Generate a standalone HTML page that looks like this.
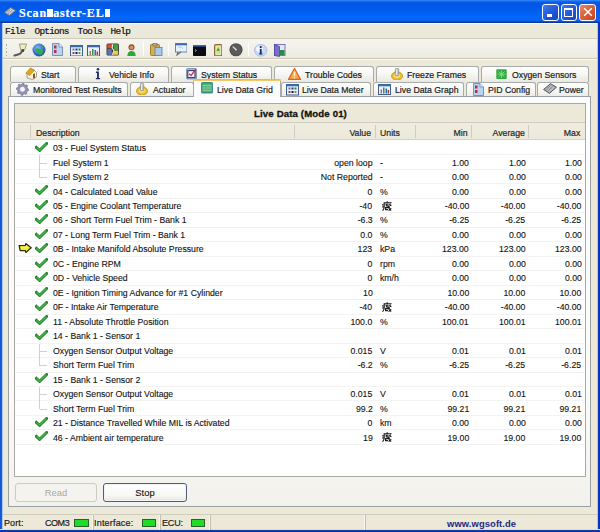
<!DOCTYPE html>
<html><head><meta charset="utf-8">
<style>
*{box-sizing:border-box}
html,body{margin:0;padding:0;width:600px;height:532px;overflow:hidden;background:#0831C8}
body{position:relative;font-family:"Liberation Sans",sans-serif;font-size:9px;color:#000}
.a{position:absolute}
#title{left:0;top:0;width:600px;height:23px;background:linear-gradient(#3C95FF 0px,#1A6CF2 1px,#0456E4 3px,#0058E8 7px,#0064F6 15px,#0468FB 20px,#0A5AD8 21px,#0038A8 22.5px)}
.mb{display:inline-block;width:5.5px;height:7.5px;background:#fff;margin:0 0.6px 0 0.2px;vertical-align:0px}
#ttext{left:19px;top:5.5px;color:#fff;font-family:"Liberation Serif",serif;font-weight:bold;font-size:12px;letter-spacing:0.8px;line-height:14px;-webkit-text-stroke:0.2px #fff}
.tbtn{top:4px;width:16.5px;height:16.5px;border:1px solid #fff;border-radius:3px;background:linear-gradient(135deg,#3C7CF0,#1F55D8 60%,#1848C0);box-shadow:0 0 0 0.5px #2A5CD8}
#client{left:2px;top:23px;width:595px;height:506px;background:#ECE9D8}
#bborder{left:0;top:529px;width:600px;height:3px;background:linear-gradient(#E0E8FF 0,#C8D8F8 0.7px,#1640B0 1px,#0A2C98)}
#lborder{left:0;top:23px;width:2.8px;height:506px;background:linear-gradient(90deg,#1A58D4 0,#1A58D4 1.8px,#A8C8F4 1.8px)}
#rborder{left:596.5px;top:23px;width:3.5px;height:509px;background:linear-gradient(90deg,#A8C8F8 0,#A8C8F8 0.8px,#0A34C0 0.8px)}
#menu{left:2.5px;top:23px;width:594px;height:16px;background:#EBE9DA;border-top:1px solid #FFFFFF}
.mn{font-family:"Liberation Mono",monospace;font-weight:normal;font-size:9.4px;letter-spacing:-0.75px;top:2px;color:#111;line-height:12px;-webkit-text-stroke:0.2px #111}
#tb{left:2.5px;top:38px;width:594px;height:21px;background:linear-gradient(#F5F4EE,#F0EFE7 70%,#EAE8DE);border-top:1px solid #CFCBBA;border-bottom:1px solid #C9C6B6;box-shadow:0 1px 0 #FAFAF6}
.grip{left:3px;width:1.5px;height:1.5px;background:#B4B09C}
.tsep{top:3px;width:1px;height:14px;background:#C8C4B2;border-right:1px solid #FFFFFF}
.tab{position:absolute;height:16px;border:1px solid #A7ABAC;border-bottom:none;border-radius:3px 3px 0 0;background:linear-gradient(#FFFFFF,#F6F6F2 50%,#E9E8E2)}
.tab.sel{height:18px;background:#FCFCFE;border-top:none;border-bottom:none;z-index:2;border-radius:2px 2px 0 0}
.tab.sel:before{content:"";position:absolute;left:-1px;right:-1px;top:0;height:2px;background:linear-gradient(#EDB040,#F8D070);border-radius:2px 2px 0 0}
.tt{position:absolute;font-size:9.7px;white-space:nowrap;color:#1a1a1a;line-height:11px;-webkit-text-stroke:0.2px #1a1a1a;transform:scaleX(0.9);transform-origin:0 0}
.tt.r1{top:68.7px}
.tt.r2{top:83.6px;z-index:3}
#panel{left:8px;top:96px;width:583px;height:411px;border:1px solid #9AA0A2;background:linear-gradient(#FCFCFE 0,#FAFAF8 300px,#F2F1EC)}
#grid{left:14px;top:103px;width:572px;height:374px;border:1px solid #A9A9A4;background:#FFF}
#gtitle{left:0;top:0;width:570px;height:19px;background:#ECE9D8;border-bottom:1px solid #CFCDBF;font-weight:bold;font-size:9.6px;line-height:20px;text-align:center;color:#111;-webkit-text-stroke:0.3px #111;padding-left:1px;letter-spacing:0.15px}
#ghead{left:0;top:19px;width:570px;height:17px;background:linear-gradient(#EFEDE0,#EBE9DA);border-bottom:1px solid #D5D2C4;font-size:9px;color:#222}
.hd{position:absolute;top:4.2px;font-size:9.7px;transform:scaleX(0.9);transform-origin:0 0;-webkit-text-stroke:0.2px #222}
.hd.r{transform-origin:100% 0}
.vd{position:absolute;top:2px;width:1px;height:13px;background:#CFCDC1}
.t{position:absolute;font-size:9.7px;white-space:nowrap;color:#111;transform:scaleX(0.9);transform-origin:0 0;-webkit-text-stroke:0.12px #111}
.t.r{transform-origin:100% 0}
.r{text-align:right}
#status{left:2.5px;top:514px;width:594px;height:15px;background:#ECE9D8;border-top:1px solid #D0CDBF}
.sbsep{position:absolute;top:0;width:2px;height:15px;background:#C2BFB0;border-left:1px solid #F8F8F2}
.st{position:absolute;top:1.5px;font-size:9.8px;color:#1a1a1a;white-space:nowrap;line-height:11px;transform:scaleX(0.92);transform-origin:0 0;-webkit-text-stroke:0.2px #1a1a1a}
.led{position:absolute;top:4px;width:14.5px;height:7.5px;background:#1EDC28;border:1px solid #2A602A}
.btn{position:absolute;border-radius:3px;text-align:center;font-size:9.4px;line-height:18px}
.sep{position:absolute;left:0;width:570px;height:1px;background:#F3F3F1}
.tl{position:absolute;width:1px;background:#D0D0D0}
.th{position:absolute;width:6.5px;height:1px;background:#D0D0D0}
#rows{left:0;top:0;width:570px;height:372px}

</style></head><body>
<div class="a" id="title">
 <svg class="a" style="left:4px;top:7px" width="12" height="9" viewBox="0 0 12 9"><path d="M0.5 5.5 L6.5 0.6 L11.5 3.4 L5.5 8.4 Z" fill="#C9CCD4" stroke="#6E7280" stroke-width="0.9"/><path d="M2.5 5.6 L6.6 2.2 M4 6.6 L8.2 3.2" stroke="#8A8E9A" stroke-width="0.8"/></svg>
 <div class="a" id="ttext">Scan<span class="mb"></span>aster-EL<span class="mb"></span></div>
 <div class="a tbtn" style="left:542px"><div class="a" style="left:3.5px;top:9.2px;width:5.5px;height:2.5px;background:#fff"></div></div>
 <div class="a tbtn" style="left:560.5px"><div class="a" style="left:2.8px;top:2.8px;width:9.2px;height:8.8px;border:1.2px solid #fff;border-top-width:2.4px"></div></div>
 <div class="a tbtn" style="left:579px;background:linear-gradient(135deg,#E7896A,#D65C36 55%,#C4441E)"><svg class="a" style="left:2.6px;top:2.3px" width="10" height="10" viewBox="0 0 10 10"><path d="M1.2 1.2L8.8 8.8M8.8 1.2L1.2 8.8" stroke="#fff" stroke-width="1.5"/></svg></div>
</div>
<div class="a" id="client"></div>
<div class="a" id="lborder"></div>
<div class="a" id="rborder"></div>
<div class="a" id="bborder"></div>
<div class="a" id="menu">
 <span class="a mn" style="left:2.5px">File</span>
 <span class="a mn" style="left:32px">Options</span>
 <span class="a mn" style="left:75px">Tools</span>
 <span class="a mn" style="left:108px">Help</span>
</div>
<div class="a" id="tb">
 <div class="a grip" style="top:5px"></div><div class="a grip" style="top:8.5px"></div><div class="a grip" style="top:12px"></div><div class="a grip" style="top:15.5px"></div>
 <div class="a tsep" style="left:140.5px"></div>
 <div class="a tsep" style="left:165px"></div>
 <div class="a tsep" style="left:245.5px"></div>
</div>
<!-- toolbar icons (page coords) -->
<svg class="a" style="left:13px;top:43px" width="15" height="14" viewBox="0 0 15 14"><path d="M9 8 Q8 11 5 11.5 L1.5 12.5" fill="none" stroke="#5A5A5A" stroke-width="2.2" stroke-linecap="round"/><path d="M6.5 1 L13.5 1 L12 6 L10.5 8.5 L8.5 8.5 L7.5 6 Z" fill="#F1EDB8" stroke="#8C8A6A" stroke-width="0.8"/><rect x="8.4" y="6.2" width="2.6" height="2.6" fill="#404040"/></svg>
<svg class="a" style="left:31.5px;top:43.2px" width="14" height="14" viewBox="0 0 14 14"><defs><radialGradient id="gl" cx="0.4" cy="0.35" r="0.7"><stop offset="0" stop-color="#8AB8F0"/><stop offset="0.6" stop-color="#3A72D0"/><stop offset="1" stop-color="#1E4A9A"/></radialGradient></defs><circle cx="7" cy="7" r="6.5" fill="url(#gl)"/><path d="M3.5 6 Q5.5 4.5 7.5 6 Q10.5 6 11.5 8 Q10.5 11 8 12.2 Q6.8 10.2 5.2 9.2 Q3.2 8 3.5 6Z" fill="#2EB044"/><path d="M8.5 2.2 Q10.5 2.6 11.6 4.4 L10 4.8 Z" fill="#34B04A"/></svg>
<svg class="a" style="left:52px;top:43.3px" width="11" height="13" viewBox="0 0 11 13"><path d="M0.5 0.5 H7 L10.5 4 V12.5 H0.5 Z" fill="#B8D4F0" stroke="#6A8AB8" stroke-width="0.9"/><path d="M7 0.5 V4 H10.5" fill="#E8F0FA" stroke="#6A8AB8" stroke-width="0.8"/><rect x="2" y="2.5" width="2.5" height="3" fill="#B03040"/><rect x="2" y="7" width="2.5" height="3" fill="#B03040"/></svg>
<svg class="a" style="left:69.5px;top:44.5px" width="13" height="11.5" viewBox="0 0 13 11.5"><rect x="0.5" y="0.5" width="12" height="10.5" fill="#EAF0F8" stroke="#3D5F8F" stroke-width="1"/><rect x="0.5" y="0.5" width="12" height="1.8" fill="#3D6BAE"/><g><rect x="2.5" y="3.5" width="2" height="2" fill="#5A7A9A"/><rect x="5.5" y="3.5" width="2" height="2" fill="#1F3F7F"/><rect x="8.5" y="3.5" width="2" height="2" fill="#2A7A4A"/><rect x="2.5" y="7" width="2" height="2" fill="#B04040"/><rect x="5.5" y="7" width="2" height="2" fill="#102040"/><rect x="8.5" y="7" width="2" height="2" fill="#7A8A6A"/></g></svg>
<svg class="a" style="left:87px;top:44.5px" width="13" height="11.5" viewBox="0 0 13 11.5"><rect x="0.5" y="0.5" width="12" height="10.5" fill="#EAF0F8" stroke="#3D5F8F" stroke-width="1"/><rect x="0.5" y="0.5" width="12" height="1.8" fill="#3D6BAE"/><rect x="2.5" y="6" width="1.5" height="4" fill="#C07040"/><rect x="5" y="4" width="1.5" height="6" fill="#2A9A4A"/><rect x="7.5" y="5" width="1.5" height="5" fill="#3A6AB0"/><rect x="9.6" y="6.5" width="1.5" height="3.5" fill="#A04030"/></svg>
<svg class="a" style="left:105.5px;top:43.3px" width="13.5" height="13" viewBox="0 0 13.5 13"><rect x="0.5" y="0.5" width="12.5" height="12" rx="1.5" fill="#3a3a3a"/><path d="M1.3 1.3 H6.5 L6 5 L1.3 5.5Z" fill="#D8502E"/><path d="M7.2 1.3 H12.2 V7 L8.2 7.2 Z" fill="#3EA63A"/><path d="M1.3 6.2 L5.5 5.8 L6.2 11.7 H1.3Z" fill="#5A72C0"/><path d="M8.4 7.8 L12.2 7.6 V11.7 H6.9 Z" fill="#E6D24A"/><path d="M6.6 1.3 L6.2 5.4 L8 7.5 L6.4 11.7" fill="none" stroke="#F4F0E0" stroke-width="1.1"/></svg>
<svg class="a" style="left:126.5px;top:44px" width="9" height="12" viewBox="0 0 9 12"><circle cx="4.5" cy="3.3" r="3" fill="#8A4A20"/><circle cx="4.5" cy="3.6" r="2" fill="#D89060"/><path d="M0.3 12 Q0.5 7 4.5 7 Q8.5 7 8.7 12 Z" fill="#2DA63A"/></svg>
<svg class="a" style="left:150px;top:43.3px" width="12.5" height="13" viewBox="0 0 12.5 13"><rect x="0.5" y="1.5" width="9" height="11" rx="1" fill="#D8B048" stroke="#8A6A20" stroke-width="0.8"/><rect x="3" y="0.5" width="4" height="2.5" fill="#B0B0B0" stroke="#606060" stroke-width="0.6"/><rect x="5" y="4.5" width="7" height="8" fill="#A8C8EC" stroke="#5A80B0" stroke-width="0.8"/></svg>
<svg class="a" style="left:174.5px;top:43.3px" width="12.5" height="12.5" viewBox="0 0 12.5 12.5"><rect x="0.5" y="0.5" width="11.5" height="8.5" fill="#E8F2FC" stroke="#5A7AA8" stroke-width="0.9"/><rect x="0.5" y="0.5" width="11.5" height="1.8" fill="#3D6BAE"/><path d="M3 9 L2 12 L6 9" fill="none" stroke="#6A6A6A" stroke-width="1.1"/><path d="M3 4 Q6 3 8 5.5" stroke="#A0B8D8" fill="none" stroke-width="0.8"/></svg>
<svg class="a" style="left:192.5px;top:44.5px" width="13" height="11" viewBox="0 0 13 11"><rect x="0" y="0" width="13" height="11" rx="0.8" fill="#0C0C14"/><rect x="0" y="0" width="13" height="1.6" fill="#3A66C0"/><path d="M2 4.5 L3.5 5.5 L2 6.5" stroke="#d0d0d0" stroke-width="0.7" fill="none"/></svg>
<svg class="a" style="left:213.5px;top:43.5px" width="8.5" height="12.5" viewBox="0 0 8.5 12.5"><rect x="0.6" y="0.6" width="7.3" height="11.3" rx="1.2" fill="#E8E4B0" stroke="#8A6A30" stroke-width="1.2"/><path d="M4.2 3 L6 7 H2.4Z" fill="#58A048"/><rect x="2.5" y="7.5" width="3.5" height="2" fill="#C8D8A0"/></svg>
<svg class="a" style="left:229.3px;top:43px" width="14" height="13.5" viewBox="0 0 14 13.5"><circle cx="7" cy="6.75" r="6.6" fill="#4E4E4E"/><circle cx="7" cy="6.75" r="5.4" fill="#5C5C5C"/><path d="M3.8 3.6 L7.6 7.2" stroke="#E8E8E8" stroke-width="1.3"/></svg>
<svg class="a" style="left:254px;top:44.3px" width="13.5" height="12.5" viewBox="0 0 13.5 12.5"><ellipse cx="6.75" cy="6.25" rx="6.3" ry="5.9" fill="#C8D8F0" stroke="#9AB0D0" stroke-width="0.6"/><ellipse cx="5.5" cy="5" rx="3.5" ry="3" fill="#F0F6FF"/><circle cx="6.75" cy="3.2" r="1.1" fill="#1A2A7A"/><rect x="5.8" y="5" width="1.9" height="5" fill="#1A2A7A"/><rect x="5" y="9.5" width="3.5" height="1" fill="#1A2A7A"/></svg>
<svg class="a" style="left:274px;top:43.5px" width="11.5" height="13" viewBox="0 0 11.5 13"><rect x="0.5" y="0.5" width="10.5" height="11" fill="#E0E8F0" stroke="#5A5AA8" stroke-width="0.8"/><rect x="6" y="6" width="4.5" height="5" fill="#2A8A4A"/><path d="M0.5 0.5 L5.5 2.5 V12.5 L0.5 11.5Z" fill="#7A70C8" stroke="#4A40A0" stroke-width="0.8"/></svg>

<!-- tabs row 1 -->
<div class="tab" style="left:10px;top:66px;width:66px"></div>
<div class="tab" style="left:77.5px;top:66px;width:91.5px"></div>
<div class="tab" style="left:170.5px;top:66px;width:101.5px"></div>
<div class="tab" style="left:273.5px;top:66px;width:100.5px"></div>
<div class="tab" style="left:376px;top:66px;width:102.5px"></div>
<div class="tab" style="left:481px;top:66px;width:108px"></div>
<span class="tt r1" style="left:40.5px">Start</span>
<span class="tt r1" style="left:108.5px">Vehicle Info</span>
<span class="tt r1" style="left:201px">System Status</span>
<span class="tt r1" style="left:305px">Trouble Codes</span>
<span class="tt r1" style="left:406.5px">Freeze Frames</span>
<span class="tt r1" style="left:511.5px">Oxygen Sensors</span>
<!-- tab icons row 1 -->
<svg class="a" style="left:24.5px;top:67px" width="13" height="13" viewBox="0 0 13 13"><path d="M2 6.5 L2 11 L7.5 12.5 L11.5 10 L11.5 5.5 L8 2 Z" fill="#FBF4DC" stroke="#8A8070" stroke-width="0.7"/><path d="M0.8 6.2 L5.5 0.8 L9.2 3.5 L4.5 8.5 Z" fill="#E4A418" stroke="#B07A10" stroke-width="0.6"/><path d="M8 7 L10 6.2 L10 11 L8 11.8Z" fill="#8A5A20"/></svg>
<svg class="a" style="left:94.8px;top:68px" width="6" height="11.5" viewBox="0 0 6 11.5"><circle cx="3" cy="1.3" r="1.3" fill="#22306E"/><path d="M0.9 3.6 H3.9 V9.9 H5.1 V11.2 H0.9 V9.9 H2 V4.9 H0.9Z" fill="#22306E"/></svg>
<svg class="a" style="left:185.5px;top:68px" width="11" height="11.5" viewBox="0 0 11 11.5"><rect x="0.5" y="0.5" width="10" height="10.5" rx="1" fill="#A8B8D8" stroke="#6A7AA0" stroke-width="0.7"/><rect x="1.8" y="2.6" width="7.2" height="7" fill="#F4F4FA" stroke="#2E3C80" stroke-width="1.1"/><path d="M3.2 5.8 L5 7.6 L9.8 1.2" fill="none" stroke="#D02A3A" stroke-width="1.3"/></svg>
<svg class="a" style="left:287.5px;top:67.8px" width="13" height="12" viewBox="0 0 13 12"><defs><linearGradient id="wg" x1="0" y1="0" x2="0" y2="1"><stop offset="0" stop-color="#F8D070"/><stop offset="1" stop-color="#F0A040"/></linearGradient></defs><path d="M6.5 0.5 L12.5 11.5 H0.5 Z" fill="url(#wg)" stroke="#E0602A" stroke-width="1.3" stroke-linejoin="round"/><rect x="5.8" y="3.8" width="1.4" height="4.2" fill="#FFF6D8"/><rect x="5.8" y="9" width="1.4" height="1.3" fill="#FFF6D8"/></svg>
<svg class="a" style="left:391px;top:67.5px" width="12" height="12.5" viewBox="0 0 12 12.5"><ellipse cx="6" cy="8" rx="5.5" ry="4.2" fill="#EEBE2A" stroke="#C8920E" stroke-width="0.8"/><ellipse cx="6" cy="7.6" rx="3.2" ry="2.3" fill="#F8E07A"/><rect x="4.3" y="0.4" width="3.4" height="7.4" rx="1" fill="#C4C4C4" stroke="#7A7A7A" stroke-width="0.6"/><rect x="5" y="1" width="1" height="6" fill="#EEE"/></svg>
<svg class="a" style="left:495.5px;top:68.5px" width="11" height="10.5" viewBox="0 0 11 10.5"><rect x="0.3" y="0.3" width="10.4" height="9.9" rx="1.2" fill="#30A840"/><path d="M2.5 2.5 L8.5 8 M8.5 2.5 L2.5 8 M5.5 1.5 V9 M1.5 5.2 H9.5" stroke="#8AE08A" stroke-width="0.9"/></svg>

<!-- tabs row 2 -->
<div class="tab" style="left:10px;top:81.5px;width:117.5px"></div>
<div class="tab" style="left:130px;top:81.5px;width:63.5px"></div>
<div class="tab" style="left:280.5px;top:81.5px;width:90px"></div>
<div class="tab" style="left:372.5px;top:81.5px;width:91.5px"></div>
<div class="tab" style="left:466px;top:81.5px;width:69.5px"></div>
<div class="tab" style="left:537px;top:81.5px;width:52px"></div>
<div class="a" id="panel"></div>
<div class="tab sel" style="left:192.5px;top:79px;width:88px"></div>
<span class="tt r2" style="left:33px">Monitored Test Results</span>
<span class="tt r2" style="left:153px">Actuator</span>
<span class="tt r2" style="left:217px;z-index:3">Live Data Grid</span>
<span class="tt r2" style="left:302px">Live Data Meter</span>
<span class="tt r2" style="left:394.5px">Live Data Graph</span>
<span class="tt r2" style="left:487.8px">PID Config</span>
<span class="tt r2" style="left:559px">Power</span>
<!-- tab icons row 2 -->
<svg class="a" style="left:16px;top:83px" width="13" height="12.5" viewBox="0 0 13 12.5"><path d="M6.50 0.05 L7.71 0.17 L8.38 1.72 L9.22 2.18 L10.88 1.87 L11.66 2.81 L11.03 4.37 L11.31 5.29 L12.70 6.25 L12.58 7.46 L11.03 8.13 L10.57 8.97 L10.88 10.63 L9.94 11.41 L8.38 10.78 L7.46 11.06 L6.50 12.45 L5.29 12.33 L4.62 10.78 L3.78 10.32 L2.12 10.63 L1.34 9.69 L1.97 8.13 L1.69 7.21 L0.30 6.25 L0.42 5.04 L1.97 4.37 L2.43 3.53 L2.12 1.87 L3.06 1.09 L4.62 1.72 L5.54 1.44Z" fill="#9090B4" stroke="#6E6E96" stroke-width="0.6"/><circle cx="6.5" cy="6.25" r="2.9" fill="#F6F6FA" stroke="#707094" stroke-width="0.6"/></svg>
<svg class="a" style="left:136px;top:82.5px" width="12" height="12.5" viewBox="0 0 12 12.5"><ellipse cx="6" cy="8" rx="5.5" ry="4.2" fill="#EEBE2A" stroke="#C8920E" stroke-width="0.8"/><ellipse cx="6" cy="7.6" rx="3.2" ry="2.3" fill="#F8E07A"/><rect x="4.3" y="0.4" width="3.4" height="7.4" rx="1" fill="#C4C4C4" stroke="#7A7A7A" stroke-width="0.6"/><rect x="5" y="1" width="1" height="6" fill="#EEE"/></svg>
<svg class="a" style="left:201px;top:82px;z-index:3" width="12" height="11.5" viewBox="0 0 12 11.5"><rect x="0.6" y="0.6" width="10.8" height="10.3" rx="1" fill="#48B070" stroke="#3A8A8A" stroke-width="1.1"/><path d="M1.5 3.7 H10.5 M1.5 6 H10.5 M1.5 8.3 H10.5" stroke="#A8E0B8" stroke-width="0.8"/></svg>
<svg class="a" style="left:286px;top:84px" width="13" height="11.5" viewBox="0 0 13 11.5"><rect x="0.5" y="0.5" width="12" height="10.5" fill="#EAF0F8" stroke="#3D5F8F" stroke-width="1"/><rect x="0.5" y="0.5" width="12" height="1.8" fill="#3D6BAE"/><g><rect x="2.5" y="3.5" width="2" height="2" fill="#5A7A9A"/><rect x="5.5" y="3.5" width="2" height="2" fill="#1F3F7F"/><rect x="8.5" y="3.5" width="2" height="2" fill="#2A7A4A"/><rect x="2.5" y="7" width="2" height="2" fill="#B04040"/><rect x="5.5" y="7" width="2" height="2" fill="#102040"/><rect x="8.5" y="7" width="2" height="2" fill="#7A8A6A"/></g></svg>
<svg class="a" style="left:378px;top:84px" width="13" height="11" viewBox="0 0 13 11"><rect x="0.5" y="0.5" width="12" height="10" fill="#EAF0F8" stroke="#3D5F8F" stroke-width="1"/><rect x="0.5" y="0.5" width="12" height="1.8" fill="#3D6BAE"/><rect x="2.5" y="5.5" width="1.5" height="4" fill="#C07040"/><rect x="5" y="3.5" width="1.5" height="6" fill="#2A9A4A"/><rect x="7.5" y="4.5" width="1.5" height="5" fill="#3A6AB0"/><rect x="9.6" y="6" width="1.5" height="3.5" fill="#A04030"/></svg>
<svg class="a" style="left:473px;top:82.5px" width="11" height="13" viewBox="0 0 11 13"><path d="M0.5 0.5 H7 L10.5 4 V12.5 H0.5 Z" fill="#B8D4F0" stroke="#6A8AB8" stroke-width="0.9"/><path d="M7 0.5 V4 H10.5" fill="#E8F0FA" stroke="#6A8AB8" stroke-width="0.8"/><rect x="2" y="2.5" width="2.5" height="3" fill="#B03040"/><rect x="2" y="7" width="2.5" height="3" fill="#B03040"/></svg>
<svg class="a" style="left:542.5px;top:83px" width="14" height="11" viewBox="0 0 14 11"><path d="M0.6 6.5 L7.5 0.7 L13.4 4.2 L6.5 10.3 Z" fill="#B8BAC0" stroke="#4A4C54" stroke-width="1"/><path d="M3 6.6 L7.6 2.6 M5 7.8 L9.6 3.8" stroke="#7A7C84" stroke-width="0.8"/></svg>

<div class="a" id="grid">
 <div class="a" id="gtitle">Live Data (Mode 01)</div>
 <div class="a" id="ghead">
  <div class="vd" style="left:15px"></div>
  <span class="hd" style="left:21px">Description</span>
  <div class="vd" style="left:279px"></div>
  <span class="hd r" style="right:214px">Value</span>
  <div class="vd" style="left:360px"></div>
  <span class="hd" style="left:365px">Units</span>
  <div class="vd" style="left:400px"></div>
  <span class="hd r" style="right:117.5px">Min</span>
  <div class="vd" style="left:456px"></div>
  <span class="hd r" style="right:60.5px">Average</span>
  <div class="vd" style="left:513px"></div>
  <span class="hd r" style="right:5px">Max</span>
 </div>

<div class="a" id="rows">
<div class="sep" style="top:50.47px"></div>
<svg class="a" style="left:20.200000000000003px;top:37.80px" width="13" height="10" viewBox="0 0 13 10"><path d="M1.3 5.4 L4.6 8.4 L11.6 1.5" fill="none" stroke="#24802C" stroke-width="2.9" stroke-linejoin="miter" stroke-linecap="square"/><path d="M1.6 5.4 L4.6 8.1 L11.3 1.6" fill="none" stroke="#3EB048" stroke-width="1.5" /></svg>
<span class="t" style="left:37.5px;top:38.10px">03 - Fuel System Status</span>
<div class="sep" style="top:64.94px"></div>
<div class="tl" style="left:24px;top:51.47px;height:22.44px"></div>
<div class="th" style="left:25px;top:58.57px"></div>
<span class="t" style="left:37.5px;top:52.57px">Fuel System 1</span>
<span class="t r" style="right:212.5px;top:52.57px">open loop</span>
<span class="t" style="left:365px;top:52.57px">-</span>
<span class="t r" style="right:116.0px;top:52.57px">1.00</span>
<span class="t r" style="right:59.5px;top:52.57px">1.00</span>
<span class="t r" style="right:3.5px;top:52.57px">1.00</span>
<div class="sep" style="top:79.41px"></div>
<div class="th" style="left:25px;top:73.04px"></div>
<span class="t" style="left:37.5px;top:67.04px">Fuel System 2</span>
<span class="t r" style="right:212.5px;top:67.04px">Not Reported</span>
<span class="t" style="left:365px;top:67.04px">-</span>
<span class="t r" style="right:116.0px;top:67.04px">0.00</span>
<span class="t r" style="right:59.5px;top:67.04px">0.00</span>
<span class="t r" style="right:3.5px;top:67.04px">0.00</span>
<div class="sep" style="top:93.88px"></div>
<svg class="a" style="left:20.200000000000003px;top:81.21px" width="13" height="10" viewBox="0 0 13 10"><path d="M1.3 5.4 L4.6 8.4 L11.6 1.5" fill="none" stroke="#24802C" stroke-width="2.9" stroke-linejoin="miter" stroke-linecap="square"/><path d="M1.6 5.4 L4.6 8.1 L11.3 1.6" fill="none" stroke="#3EB048" stroke-width="1.5" /></svg>
<span class="t" style="left:37.5px;top:81.51px">04 - Calculated Load Value</span>
<span class="t r" style="right:212.5px;top:81.51px">0</span>
<span class="t" style="left:365px;top:81.51px">%</span>
<span class="t r" style="right:116.0px;top:81.51px">0.00</span>
<span class="t r" style="right:59.5px;top:81.51px">0.00</span>
<span class="t r" style="right:3.5px;top:81.51px">0.00</span>
<div class="sep" style="top:108.35px"></div>
<svg class="a" style="left:20.200000000000003px;top:95.68px" width="13" height="10" viewBox="0 0 13 10"><path d="M1.3 5.4 L4.6 8.4 L11.6 1.5" fill="none" stroke="#24802C" stroke-width="2.9" stroke-linejoin="miter" stroke-linecap="square"/><path d="M1.6 5.4 L4.6 8.1 L11.3 1.6" fill="none" stroke="#3EB048" stroke-width="1.5" /></svg>
<span class="t" style="left:37.5px;top:95.98px">05 - Engine Coolant Temperature</span>
<span class="t r" style="right:212.5px;top:95.98px">-40</span>
<svg class="a" style="left:366.5px;top:96.58px" width="10" height="10" viewBox="0 0 10 10"><g fill="none" stroke="#1a1a1a" stroke-width="1.15"><path d="M5.2 0.2V1.5M1.6 1.7H9.6M2.2 1.7V5.8Q2.1 8.3 0.5 9.7M0.3 3.4L1.4 4.2M0.3 6.3L1.5 5.6"/><path d="M3.6 2.8L5 4M5.4 2.7L6.4 3.6M8.6 2.6L7.4 3.8M7.2 3.8L9.4 4.6M3.8 4.9H6.2V6.6H3.6V8.6H6M7.3 5.2V7M6.8 7.3L9.2 9.5M9.2 7.2L6.6 9.6"/></g></svg>
<span class="t r" style="right:116.0px;top:95.98px">-40.00</span>
<span class="t r" style="right:59.5px;top:95.98px">-40.00</span>
<span class="t r" style="right:3.5px;top:95.98px">-40.00</span>
<div class="sep" style="top:122.82px"></div>
<svg class="a" style="left:20.200000000000003px;top:110.15px" width="13" height="10" viewBox="0 0 13 10"><path d="M1.3 5.4 L4.6 8.4 L11.6 1.5" fill="none" stroke="#24802C" stroke-width="2.9" stroke-linejoin="miter" stroke-linecap="square"/><path d="M1.6 5.4 L4.6 8.1 L11.3 1.6" fill="none" stroke="#3EB048" stroke-width="1.5" /></svg>
<span class="t" style="left:37.5px;top:110.45px">06 - Short Term Fuel Trim - Bank 1</span>
<span class="t r" style="right:212.5px;top:110.45px">-6.3</span>
<span class="t" style="left:365px;top:110.45px">%</span>
<span class="t r" style="right:116.0px;top:110.45px">-6.25</span>
<span class="t r" style="right:59.5px;top:110.45px">-6.25</span>
<span class="t r" style="right:3.5px;top:110.45px">-6.25</span>
<div class="sep" style="top:137.29px"></div>
<svg class="a" style="left:20.200000000000003px;top:124.62px" width="13" height="10" viewBox="0 0 13 10"><path d="M1.3 5.4 L4.6 8.4 L11.6 1.5" fill="none" stroke="#24802C" stroke-width="2.9" stroke-linejoin="miter" stroke-linecap="square"/><path d="M1.6 5.4 L4.6 8.1 L11.3 1.6" fill="none" stroke="#3EB048" stroke-width="1.5" /></svg>
<span class="t" style="left:37.5px;top:124.92px">07 - Long Term Fuel Trim - Bank 1</span>
<span class="t r" style="right:212.5px;top:124.92px">0.0</span>
<span class="t" style="left:365px;top:124.92px">%</span>
<span class="t r" style="right:116.0px;top:124.92px">0.00</span>
<span class="t r" style="right:59.5px;top:124.92px">0.00</span>
<span class="t r" style="right:3.5px;top:124.92px">0.00</span>
<div class="sep" style="top:151.76px"></div>
<svg class="a" style="left:20.200000000000003px;top:139.09px" width="13" height="10" viewBox="0 0 13 10"><path d="M1.3 5.4 L4.6 8.4 L11.6 1.5" fill="none" stroke="#24802C" stroke-width="2.9" stroke-linejoin="miter" stroke-linecap="square"/><path d="M1.6 5.4 L4.6 8.1 L11.3 1.6" fill="none" stroke="#3EB048" stroke-width="1.5" /></svg>
<svg class="a" style="left:3.3999999999999986px;top:139.19px" width="14" height="11" viewBox="0 0 14 11"><path d="M1.1 2.7 L7.2 2.7 L7.8 0.6 L13.2 4.8 L7.8 9.4 L7.2 7.5 L2.2 7.5 Z" fill="#F2F020" stroke="#2a2a18" stroke-width="1.25" stroke-linejoin="round"/><path d="M3 4 L9 4" stroke="#FAFA90" stroke-width="1"/></svg>
<span class="t" style="left:37.5px;top:139.39px">0B - Intake Manifold Absolute Pressure</span>
<span class="t r" style="right:212.5px;top:139.39px">123</span>
<span class="t" style="left:365px;top:139.39px">kPa</span>
<span class="t r" style="right:116.0px;top:139.39px">123.00</span>
<span class="t r" style="right:59.5px;top:139.39px">123.00</span>
<span class="t r" style="right:3.5px;top:139.39px">123.00</span>
<div class="sep" style="top:166.23px"></div>
<svg class="a" style="left:20.200000000000003px;top:153.56px" width="13" height="10" viewBox="0 0 13 10"><path d="M1.3 5.4 L4.6 8.4 L11.6 1.5" fill="none" stroke="#24802C" stroke-width="2.9" stroke-linejoin="miter" stroke-linecap="square"/><path d="M1.6 5.4 L4.6 8.1 L11.3 1.6" fill="none" stroke="#3EB048" stroke-width="1.5" /></svg>
<span class="t" style="left:37.5px;top:153.86px">0C - Engine RPM</span>
<span class="t r" style="right:212.5px;top:153.86px">0</span>
<span class="t" style="left:365px;top:153.86px">rpm</span>
<span class="t r" style="right:116.0px;top:153.86px">0.00</span>
<span class="t r" style="right:59.5px;top:153.86px">0.00</span>
<span class="t r" style="right:3.5px;top:153.86px">0.00</span>
<div class="sep" style="top:180.70px"></div>
<svg class="a" style="left:20.200000000000003px;top:168.03px" width="13" height="10" viewBox="0 0 13 10"><path d="M1.3 5.4 L4.6 8.4 L11.6 1.5" fill="none" stroke="#24802C" stroke-width="2.9" stroke-linejoin="miter" stroke-linecap="square"/><path d="M1.6 5.4 L4.6 8.1 L11.3 1.6" fill="none" stroke="#3EB048" stroke-width="1.5" /></svg>
<span class="t" style="left:37.5px;top:168.33px">0D - Vehicle Speed</span>
<span class="t r" style="right:212.5px;top:168.33px">0</span>
<span class="t" style="left:365px;top:168.33px">km/h</span>
<span class="t r" style="right:116.0px;top:168.33px">0.00</span>
<span class="t r" style="right:59.5px;top:168.33px">0.00</span>
<span class="t r" style="right:3.5px;top:168.33px">0.00</span>
<div class="sep" style="top:195.17px"></div>
<svg class="a" style="left:20.200000000000003px;top:182.50px" width="13" height="10" viewBox="0 0 13 10"><path d="M1.3 5.4 L4.6 8.4 L11.6 1.5" fill="none" stroke="#24802C" stroke-width="2.9" stroke-linejoin="miter" stroke-linecap="square"/><path d="M1.6 5.4 L4.6 8.1 L11.3 1.6" fill="none" stroke="#3EB048" stroke-width="1.5" /></svg>
<span class="t" style="left:37.5px;top:182.80px">0E - Ignition Timing Advance for #1 Cylinder</span>
<span class="t r" style="right:212.5px;top:182.80px">10</span>
<span class="t r" style="right:116.0px;top:182.80px">10.00</span>
<span class="t r" style="right:59.5px;top:182.80px">10.00</span>
<span class="t r" style="right:3.5px;top:182.80px">10.00</span>
<div class="sep" style="top:209.64px"></div>
<svg class="a" style="left:20.200000000000003px;top:196.97px" width="13" height="10" viewBox="0 0 13 10"><path d="M1.3 5.4 L4.6 8.4 L11.6 1.5" fill="none" stroke="#24802C" stroke-width="2.9" stroke-linejoin="miter" stroke-linecap="square"/><path d="M1.6 5.4 L4.6 8.1 L11.3 1.6" fill="none" stroke="#3EB048" stroke-width="1.5" /></svg>
<span class="t" style="left:37.5px;top:197.27px">0F - Intake Air Temperature</span>
<span class="t r" style="right:212.5px;top:197.27px">-40</span>
<svg class="a" style="left:366.5px;top:197.87px" width="10" height="10" viewBox="0 0 10 10"><g fill="none" stroke="#1a1a1a" stroke-width="1.15"><path d="M5.2 0.2V1.5M1.6 1.7H9.6M2.2 1.7V5.8Q2.1 8.3 0.5 9.7M0.3 3.4L1.4 4.2M0.3 6.3L1.5 5.6"/><path d="M3.6 2.8L5 4M5.4 2.7L6.4 3.6M8.6 2.6L7.4 3.8M7.2 3.8L9.4 4.6M3.8 4.9H6.2V6.6H3.6V8.6H6M7.3 5.2V7M6.8 7.3L9.2 9.5M9.2 7.2L6.6 9.6"/></g></svg>
<span class="t r" style="right:116.0px;top:197.27px">-40.00</span>
<span class="t r" style="right:59.5px;top:197.27px">-40.00</span>
<span class="t r" style="right:3.5px;top:197.27px">-40.00</span>
<div class="sep" style="top:224.11px"></div>
<svg class="a" style="left:20.200000000000003px;top:211.44px" width="13" height="10" viewBox="0 0 13 10"><path d="M1.3 5.4 L4.6 8.4 L11.6 1.5" fill="none" stroke="#24802C" stroke-width="2.9" stroke-linejoin="miter" stroke-linecap="square"/><path d="M1.6 5.4 L4.6 8.1 L11.3 1.6" fill="none" stroke="#3EB048" stroke-width="1.5" /></svg>
<span class="t" style="left:37.5px;top:211.74px">11 - Absolute Throttle Position</span>
<span class="t r" style="right:212.5px;top:211.74px">100.0</span>
<span class="t" style="left:365px;top:211.74px">%</span>
<span class="t r" style="right:116.0px;top:211.74px">100.01</span>
<span class="t r" style="right:59.5px;top:211.74px">100.01</span>
<span class="t r" style="right:3.5px;top:211.74px">100.01</span>
<div class="sep" style="top:238.58px"></div>
<svg class="a" style="left:20.200000000000003px;top:225.91px" width="13" height="10" viewBox="0 0 13 10"><path d="M1.3 5.4 L4.6 8.4 L11.6 1.5" fill="none" stroke="#24802C" stroke-width="2.9" stroke-linejoin="miter" stroke-linecap="square"/><path d="M1.6 5.4 L4.6 8.1 L11.3 1.6" fill="none" stroke="#3EB048" stroke-width="1.5" /></svg>
<span class="t" style="left:37.5px;top:226.21px">14 - Bank 1 - Sensor 1</span>
<div class="sep" style="top:253.05px"></div>
<div class="tl" style="left:24px;top:239.58px;height:22.44px"></div>
<div class="th" style="left:25px;top:246.68px"></div>
<span class="t" style="left:37.5px;top:240.68px">Oxygen Sensor Output Voltage</span>
<span class="t r" style="right:212.5px;top:240.68px">0.015</span>
<span class="t" style="left:365px;top:240.68px">V</span>
<span class="t r" style="right:116.0px;top:240.68px">0.01</span>
<span class="t r" style="right:59.5px;top:240.68px">0.01</span>
<span class="t r" style="right:3.5px;top:240.68px">0.01</span>
<div class="sep" style="top:267.52px"></div>
<div class="th" style="left:25px;top:261.15px"></div>
<span class="t" style="left:37.5px;top:255.15px">Short Term Fuel Trim</span>
<span class="t r" style="right:212.5px;top:255.15px">-6.2</span>
<span class="t" style="left:365px;top:255.15px">%</span>
<span class="t r" style="right:116.0px;top:255.15px">-6.25</span>
<span class="t r" style="right:59.5px;top:255.15px">-6.25</span>
<span class="t r" style="right:3.5px;top:255.15px">-6.25</span>
<div class="sep" style="top:281.99px"></div>
<svg class="a" style="left:20.200000000000003px;top:269.32px" width="13" height="10" viewBox="0 0 13 10"><path d="M1.3 5.4 L4.6 8.4 L11.6 1.5" fill="none" stroke="#24802C" stroke-width="2.9" stroke-linejoin="miter" stroke-linecap="square"/><path d="M1.6 5.4 L4.6 8.1 L11.3 1.6" fill="none" stroke="#3EB048" stroke-width="1.5" /></svg>
<span class="t" style="left:37.5px;top:269.62px">15 - Bank 1 - Sensor 2</span>
<div class="sep" style="top:296.46px"></div>
<div class="tl" style="left:24px;top:282.99px;height:22.44px"></div>
<div class="th" style="left:25px;top:290.09px"></div>
<span class="t" style="left:37.5px;top:284.09px">Oxygen Sensor Output Voltage</span>
<span class="t r" style="right:212.5px;top:284.09px">0.015</span>
<span class="t" style="left:365px;top:284.09px">V</span>
<span class="t r" style="right:116.0px;top:284.09px">0.01</span>
<span class="t r" style="right:59.5px;top:284.09px">0.01</span>
<span class="t r" style="right:3.5px;top:284.09px">0.01</span>
<div class="sep" style="top:310.93px"></div>
<div class="th" style="left:25px;top:304.56px"></div>
<span class="t" style="left:37.5px;top:298.56px">Short Term Fuel Trim</span>
<span class="t r" style="right:212.5px;top:298.56px">99.2</span>
<span class="t" style="left:365px;top:298.56px">%</span>
<span class="t r" style="right:116.0px;top:298.56px">99.21</span>
<span class="t r" style="right:59.5px;top:298.56px">99.21</span>
<span class="t r" style="right:3.5px;top:298.56px">99.21</span>
<div class="sep" style="top:325.40px"></div>
<svg class="a" style="left:20.200000000000003px;top:312.73px" width="13" height="10" viewBox="0 0 13 10"><path d="M1.3 5.4 L4.6 8.4 L11.6 1.5" fill="none" stroke="#24802C" stroke-width="2.9" stroke-linejoin="miter" stroke-linecap="square"/><path d="M1.6 5.4 L4.6 8.1 L11.3 1.6" fill="none" stroke="#3EB048" stroke-width="1.5" /></svg>
<span class="t" style="left:37.5px;top:313.03px">21 - Distance Travelled While MIL is Activated</span>
<span class="t r" style="right:212.5px;top:313.03px">0</span>
<span class="t" style="left:365px;top:313.03px">km</span>
<span class="t r" style="right:116.0px;top:313.03px">0.00</span>
<span class="t r" style="right:59.5px;top:313.03px">0.00</span>
<span class="t r" style="right:3.5px;top:313.03px">0.00</span>
<div class="sep" style="top:339.87px"></div>
<svg class="a" style="left:20.200000000000003px;top:327.20px" width="13" height="10" viewBox="0 0 13 10"><path d="M1.3 5.4 L4.6 8.4 L11.6 1.5" fill="none" stroke="#24802C" stroke-width="2.9" stroke-linejoin="miter" stroke-linecap="square"/><path d="M1.6 5.4 L4.6 8.1 L11.3 1.6" fill="none" stroke="#3EB048" stroke-width="1.5" /></svg>
<span class="t" style="left:37.5px;top:327.50px">46 - Ambient air temperature</span>
<span class="t r" style="right:212.5px;top:327.50px">19</span>
<svg class="a" style="left:366.5px;top:328.10px" width="10" height="10" viewBox="0 0 10 10"><g fill="none" stroke="#1a1a1a" stroke-width="1.15"><path d="M5.2 0.2V1.5M1.6 1.7H9.6M2.2 1.7V5.8Q2.1 8.3 0.5 9.7M0.3 3.4L1.4 4.2M0.3 6.3L1.5 5.6"/><path d="M3.6 2.8L5 4M5.4 2.7L6.4 3.6M8.6 2.6L7.4 3.8M7.2 3.8L9.4 4.6M3.8 4.9H6.2V6.6H3.6V8.6H6M7.3 5.2V7M6.8 7.3L9.2 9.5M9.2 7.2L6.6 9.6"/></g></svg>
<span class="t r" style="right:116.0px;top:327.50px">19.00</span>
<span class="t r" style="right:59.5px;top:327.50px">19.00</span>
<span class="t r" style="right:3.5px;top:327.50px">19.00</span>
</div>
</div>
<div class="a btn" style="left:15px;top:483px;width:82px;height:18.5px;border:1px solid #CDCBC2;background:#F4F3EE;color:#ABA99F">Read</div>
<div class="a btn" style="left:103px;top:483px;width:84px;height:18.5px;border:1px solid #4E5E7C;background:linear-gradient(#FFFFFF,#F7F7F3 70%,#E6E5DC);box-shadow:inset 0 0 0 1px #F0F2F8;color:#111;-webkit-text-stroke:0.1px #111">Stop</div>
<div class="a" id="status">
 <span class="st" style="left:1px;letter-spacing:0.1px">Port:</span>
 <span class="st" style="left:42px;letter-spacing:-0.5px">COM3</span>
 <div class="led" style="left:71.5px"></div>
 <div class="sbsep" style="left:89px"></div>
 <span class="st" style="left:91px;letter-spacing:0.2px">Interface:</span>
 <div class="led" style="left:139px"></div>
 <div class="sbsep" style="left:156.5px"></div>
 <span class="st" style="left:159.5px;letter-spacing:-0.2px">ECU:</span>
 <div class="led" style="left:188px"></div>
 <div class="sbsep" style="left:206.5px"></div>
 <div class="sbsep" style="left:361.5px"></div>
 <span class="st" style="left:444.5px;top:2.5px;font-size:9.4px;transform:none;-webkit-text-stroke:0;font-weight:bold;color:#1C2A80;letter-spacing:0.1px">www.wgsoft.de</span>
</div>

</body></html>
